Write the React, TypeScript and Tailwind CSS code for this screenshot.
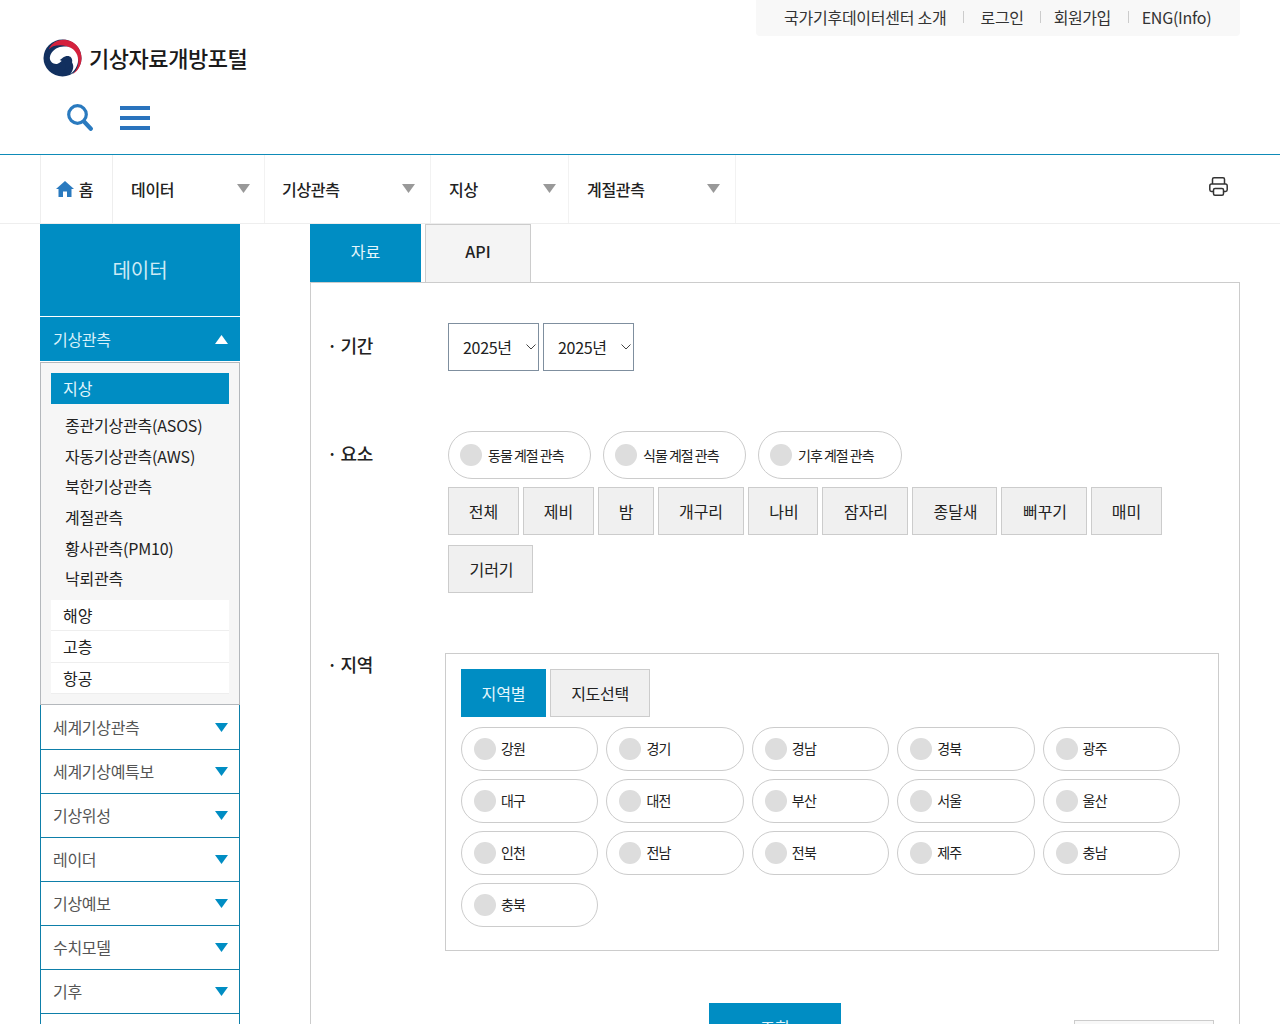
import React from "react";

const blue = "bg-[#008dc3]";

function Tri({ className }: { className: string }) {
  return (
    <svg width="13" height="9" viewBox="0 0 13 9" className={className}>
      <path d="M0 0H13L6.5 9Z" fill="currentColor" />
    </svg>
  );
}

function Logo() {
  return (
    <svg width="39" height="38" viewBox="0 0 40 40" preserveAspectRatio="none" className="mt-[2px] shrink-0">
      <circle cx="20" cy="20" r="19.5" fill="#12305f" />
      <path d="M6 11C9 3 17 0 24 1c9 1 16 10 15.500 20-.4 7-4 13-9 16 4-4 6.500-10 5.500-16C34 12 26 6.500 18 6.500 12 6.500 8 8 6 11Z" fill="#d4213d" />
      <path d="M8 16c3-6 9-9 16-8 7 1 12 7 12 14 0 6-4 12-8 15 3-4 4-8 2-12-1-3-4-5-8-4-3 1-4 4-7 5-4 1-8-2-8-6 0-1 .4-3 1-4Z" fill="#fff" />
      <path d="M17 22c2 0 3-3 7-4 4-.6 6 2 6 5 0 6-6 10-9 10 4-3 2-7 0-9-1-1-2-1-4-2Z" fill="#12305f" />
    </svg>
  );
}

function Pill({ label, wide }: { label: string; wide?: boolean }) {
  return (
    <div
      className={
        wide
          ? "flex h-12 items-center rounded-full border border-[#cccccc] bg-white pl-[11px]"
          : "flex h-11 items-center rounded-full border border-[#cccccc] bg-white pl-[12px]"
      }
    >
      <span className="h-[22px] w-[22px] shrink-0 rounded-full bg-[#dddddd]" />
      <span className={wide ? "ml-[6px] text-sm tracking-[-1px] text-[#222222]" : "mb-[3px] ml-[5px] text-sm tracking-[-0.8px] text-[#222222]"}>{label}</span>
    </div>
  );
}

function ElementBtn({ label, w }: { label: string; w: string }) {
  return (
    <div className={`flex h-12 items-center justify-center border border-[#cccccc] bg-[#f0f0f0] text-base text-[#222222] ${w}`}>
      {label}
    </div>
  );
}

function FieldLabel({ text, className }: { text: string; className: string }) {
  return <div className={`w-[118px] shrink-0 pl-4 text-lg font-medium leading-6 tracking-[-0.4px] text-[#222222] ${className}`}>· {text}</div>;
}

function YearSelect() {
  return (
    <div className="relative h-12 w-[91px]">
      <select defaultValue="2025" className="h-full w-full appearance-none border border-[#7f8f9f] bg-white pl-[14px] text-base tracking-[-0.3px] text-[#222222]">
        <option value="2025">2025년</option>
      </select>
      <svg width="10" height="6" viewBox="0 0 10 6" fill="none" stroke="#444444" strokeWidth="1" className="pointer-events-none absolute right-[3px] top-[21px]">
        <path d="M.5 .5 5 5 9.500 .5" />
      </svg>
    </div>
  );
}

const navItems = [
  { label: "데이터", cls: "w-[152px] pl-[18px] pr-[14px]" },
  { label: "기상관측", cls: "w-[166px] pl-[17px] pr-[15px]" },
  { label: "지상", cls: "w-[138px] pl-[18px] pr-[12px]" },
  { label: "계절관측", cls: "w-[167px] pl-[18px] pr-[15px]" },
];

const subItems = ["종관기상관측(ASOS)", "자동기상관측(AWS)", "북한기상관측", "계절관측", "황사관측(PM10)", "낙뢰관측"];
const sideRows = ["세계기상관측", "세계기상예특보", "기상위성", "레이더", "기상예보", "수치모델", "기후"];
const elements = [
  { label: "전체", w: "w-[71px]" },
  { label: "제비", w: "w-[71px]" },
  { label: "밤", w: "w-[56px]" },
  { label: "개구리", w: "w-[86px]" },
  { label: "나비", w: "w-[70px] pl-[2px]" },
  { label: "잠자리", w: "w-[86px] pl-[2px]" },
  { label: "종달새", w: "w-[85px] pl-[2px]" },
  { label: "뻐꾸기", w: "w-[86px] pl-[2px]" },
  { label: "매미", w: "w-[71px]" },
  { label: "기러기", w: "w-[85px] pl-[2px]" },
];
const regions = ["강원", "경기", "경남", "경북", "광주", "대구", "대전", "부산", "서울", "울산", "인천", "전남", "전북", "제주", "충남", "충북"];

export default function App() {
  return (
    <div className="h-[1024px] overflow-hidden bg-white font-['Noto_Sans_CJK_KR','Noto_Sans',sans-serif] text-[#222222]">
      <header className="h-[155px] border-b border-[#0e8bb8] px-10">
        <div className="flex justify-end">
          <div className="flex h-9 w-[484px] items-center rounded-b-sm bg-[#f8f8f8] pb-[2px] pl-[28px] text-base leading-none text-[#333333]">
            <span className="tracking-[-0.25px]">국가기후데이터센터 소개</span>
            <span className="ml-4 mr-[17px] h-3 w-px bg-[#cccccc]" />
            <span className="tracking-[-0.3px]">로그인</span>
            <span className="ml-4 mr-[13px] h-3 w-px bg-[#cccccc]" />
            <span className="tracking-[-0.5px]">회원가입</span>
            <span className="ml-[17px] mr-[13px] h-3 w-px bg-[#cccccc]" />
            <span className="tracking-[-0.25px]">ENG(Info)</span>
          </div>
        </div>
        <div className="mt-[1px] flex h-10 items-center pl-[3px]">
          <Logo />
          <span className="ml-[7px] text-[22px] font-medium leading-none tracking-[-0.45px] text-[#1a1a1a]">기상자료개방포털</span>
        </div>
        <div className="mt-[27px] flex items-center pl-[27px]">
          <svg width="27" height="27" viewBox="0 0 27 27" fill="none" stroke="#2a7abf">
            <circle cx="10.500" cy="10.500" r="8.800" strokeWidth="3.200" />
            <path d="M17 17.500 23.800 24.800" strokeWidth="4.200" strokeLinecap="round" />
          </svg>
          <div className="ml-[26px] flex w-[30px] flex-col gap-[6px]">
            <span className="h-1 bg-[#2a73bd]" />
            <span className="h-1 bg-[#2a73bd]" />
            <span className="h-1 bg-[#2a73bd]" />
          </div>
        </div>
      </header>

      <nav className="flex h-[69px] items-center justify-between border-b border-[#eeeeee] px-10">
        <div className="flex h-full text-base font-medium tracking-[-0.3px] text-[#222222]">
          <div className="flex w-[73px] items-center justify-center gap-[5px] border-x border-[#eeeeee] pr-1">
            <svg width="18" height="16" viewBox="0 0 18 16">
              <path d="M9 0 18 8H15.500V16H11V10.500H7V16H2.500V8H0Z" fill="#2a7abf" />
            </svg>
            <span>홈</span>
          </div>
          {navItems.map((n) => (
            <div key={n.label} className={`flex items-center justify-between border-r border-[#f2f2f2] ${n.cls}`}>
              <span>{n.label}</span>
              <Tri className="mb-px text-[#999999]" />
            </div>
          ))}
        </div>
        <svg width="19" height="19" viewBox="0 0 19 19" fill="none" stroke="#333333" strokeWidth="1.500" className="mb-[5px] mr-[12px]">
          <path d="M3.500 7V2.200C3.500 1.300 4 .8 5 .8H14C15 .8 15.500 1.300 15.500 2.200V7" />
          <path d="M4 14.500H2.500C1.400 14.500 .8 13.800 .8 12.800V8.800C.8 7.700 1.400 7 2.500 7H16.500C17.600 7 18.200 7.700 18.200 8.800V12.800C18.200 13.800 17.600 14.500 16.500 14.500H15" />
          <rect x="4.500" y="11.500" width="10" height="6.700" rx="1.500" />
        </svg>
      </nav>

      <main className="flex gap-[70px] pl-10 pr-10">
        <aside className="w-[200px] shrink-0">
          <div className={`flex h-[92px] items-center justify-center text-xl text-[#cdeaf5] ${blue}`}>데이터</div>
          <div className={`mt-px flex h-[44px] items-center justify-between pl-[13px] pr-[12px] text-base tracking-[-0.3px] text-[#d9f1fa] ${blue}`}>
            <span>기상관측</span>
            <Tri className="rotate-180 text-white" />
          </div>
          <div className="mt-px h-[343px] border border-[#b4b8bc] bg-[#f6f6f6] px-[10px] pt-[10px]">
            <div className={`flex h-[31px] items-center pb-[2px] pl-3 text-base text-[#e4f6fc] ${blue}`}>지상</div>
            <ul className="mt-[6px] flex flex-col text-base text-[#222222]">
              {subItems.map((s) => (
                <li key={s} className="flex h-[30.600px] items-center pl-[14px] tracking-[-0.2px]">{s}</li>
              ))}
            </ul>
            <ul className="mt-[6px] bg-white text-base text-[#222222]">
              {["해양", "고층", "항공"].map((s) => (
                <li key={s} className="flex h-[31.500px] items-center border-b border-[#eeeeee] pl-3">{s}</li>
              ))}
            </ul>
          </div>
          <div>
            {sideRows.map((s, i) => (
              <div key={s} className={i === 0 ? "flex h-[45px] items-center justify-between border-x border-b border-[#0e7fa9] bg-white pl-3 pr-[11px] text-base tracking-[-0.3px] text-[#555555]" : "flex h-11 items-center justify-between border-x border-b border-[#0e7fa9] bg-white pl-3 pr-[11px] text-base tracking-[-0.3px] text-[#555555]"}>
                <span className={i === 0 ? "" : "mb-[2px]"}>{s}</span>
                <Tri className="text-[#008dc3]" />
              </div>
            ))}
          </div>
          <div className="h-11 border-x border-[#0e7fa9]" />
        </aside>

        <section className="min-w-0 flex-1">
          <div className="flex gap-1">
            <div className={`flex h-[58px] w-[111px] items-center justify-center pb-[5px] text-base text-[#e4f6fc] ${blue}`}>자료</div>
            <div className="flex h-[58px] w-[106px] items-center justify-center border-x border-t border-[#cccccc] bg-[#f4f4f4] pb-[5px] text-base font-medium">API</div>
          </div>
          <div className="h-[800px] border border-[#cccccc] pl-0">
            <div className="mt-10 flex">
              <FieldLabel text="기간" className="pt-[10px]" />
              <div className="ml-[19px] flex gap-1">
                <YearSelect />
                <YearSelect />
              </div>
            </div>

            <div className="mt-[60px] flex">
              <FieldLabel text="요소" className="pt-[10px]" />
              <div className="ml-[19px] w-[730px]">
                <div className="flex gap-3">
                  <div className="w-[143px]"><Pill wide label="동물 계절 관측" /></div>
                  <div className="w-[143px]"><Pill wide label="식물 계절 관측" /></div>
                  <div className="w-[144px]"><Pill wide label="기후 계절 관측" /></div>
                </div>
                <div className="mt-2 flex flex-wrap gap-x-1 gap-y-[10px]">
                  {elements.map((e) => <ElementBtn key={e.label} label={e.label} w={e.w} />)}
                </div>
              </div>
            </div>

            <div className="mt-[60px] flex">
              <FieldLabel text="지역" className="-mt-px" />
              <div className="ml-4 h-[298px] w-[774px] border border-[#cccccc] px-[15px] pt-[15px]">
                <div className="flex gap-1">
                  <div className={`flex h-12 w-[85px] items-center justify-center text-base text-[#e4f6fc] ${blue}`}>지역별</div>
                  <div className="flex h-12 w-[100px] items-center justify-center border border-[#cccccc] bg-[#f0f0f0] text-base tracking-[-0.3px]">지도선택</div>
                </div>
                <div className="mt-[10px] grid w-[719px] grid-cols-5 gap-x-2 gap-y-2">
                  {regions.map((r) => <Pill key={r} label={r} />)}
                </div>
              </div>
            </div>

            <div className="relative mt-[52px] h-20">
              <div className={`absolute left-[398px] top-0 flex h-12 w-[132px] items-center justify-center text-base text-[#e4f6fc] ${blue}`}>조회</div>
              <div className="absolute left-[763px] top-[17px] h-12 w-[140px] border border-[#cccccc] bg-[#f8f8f8]" />
            </div>
          </div>
        </section>
      </main>
    </div>
  );
}
